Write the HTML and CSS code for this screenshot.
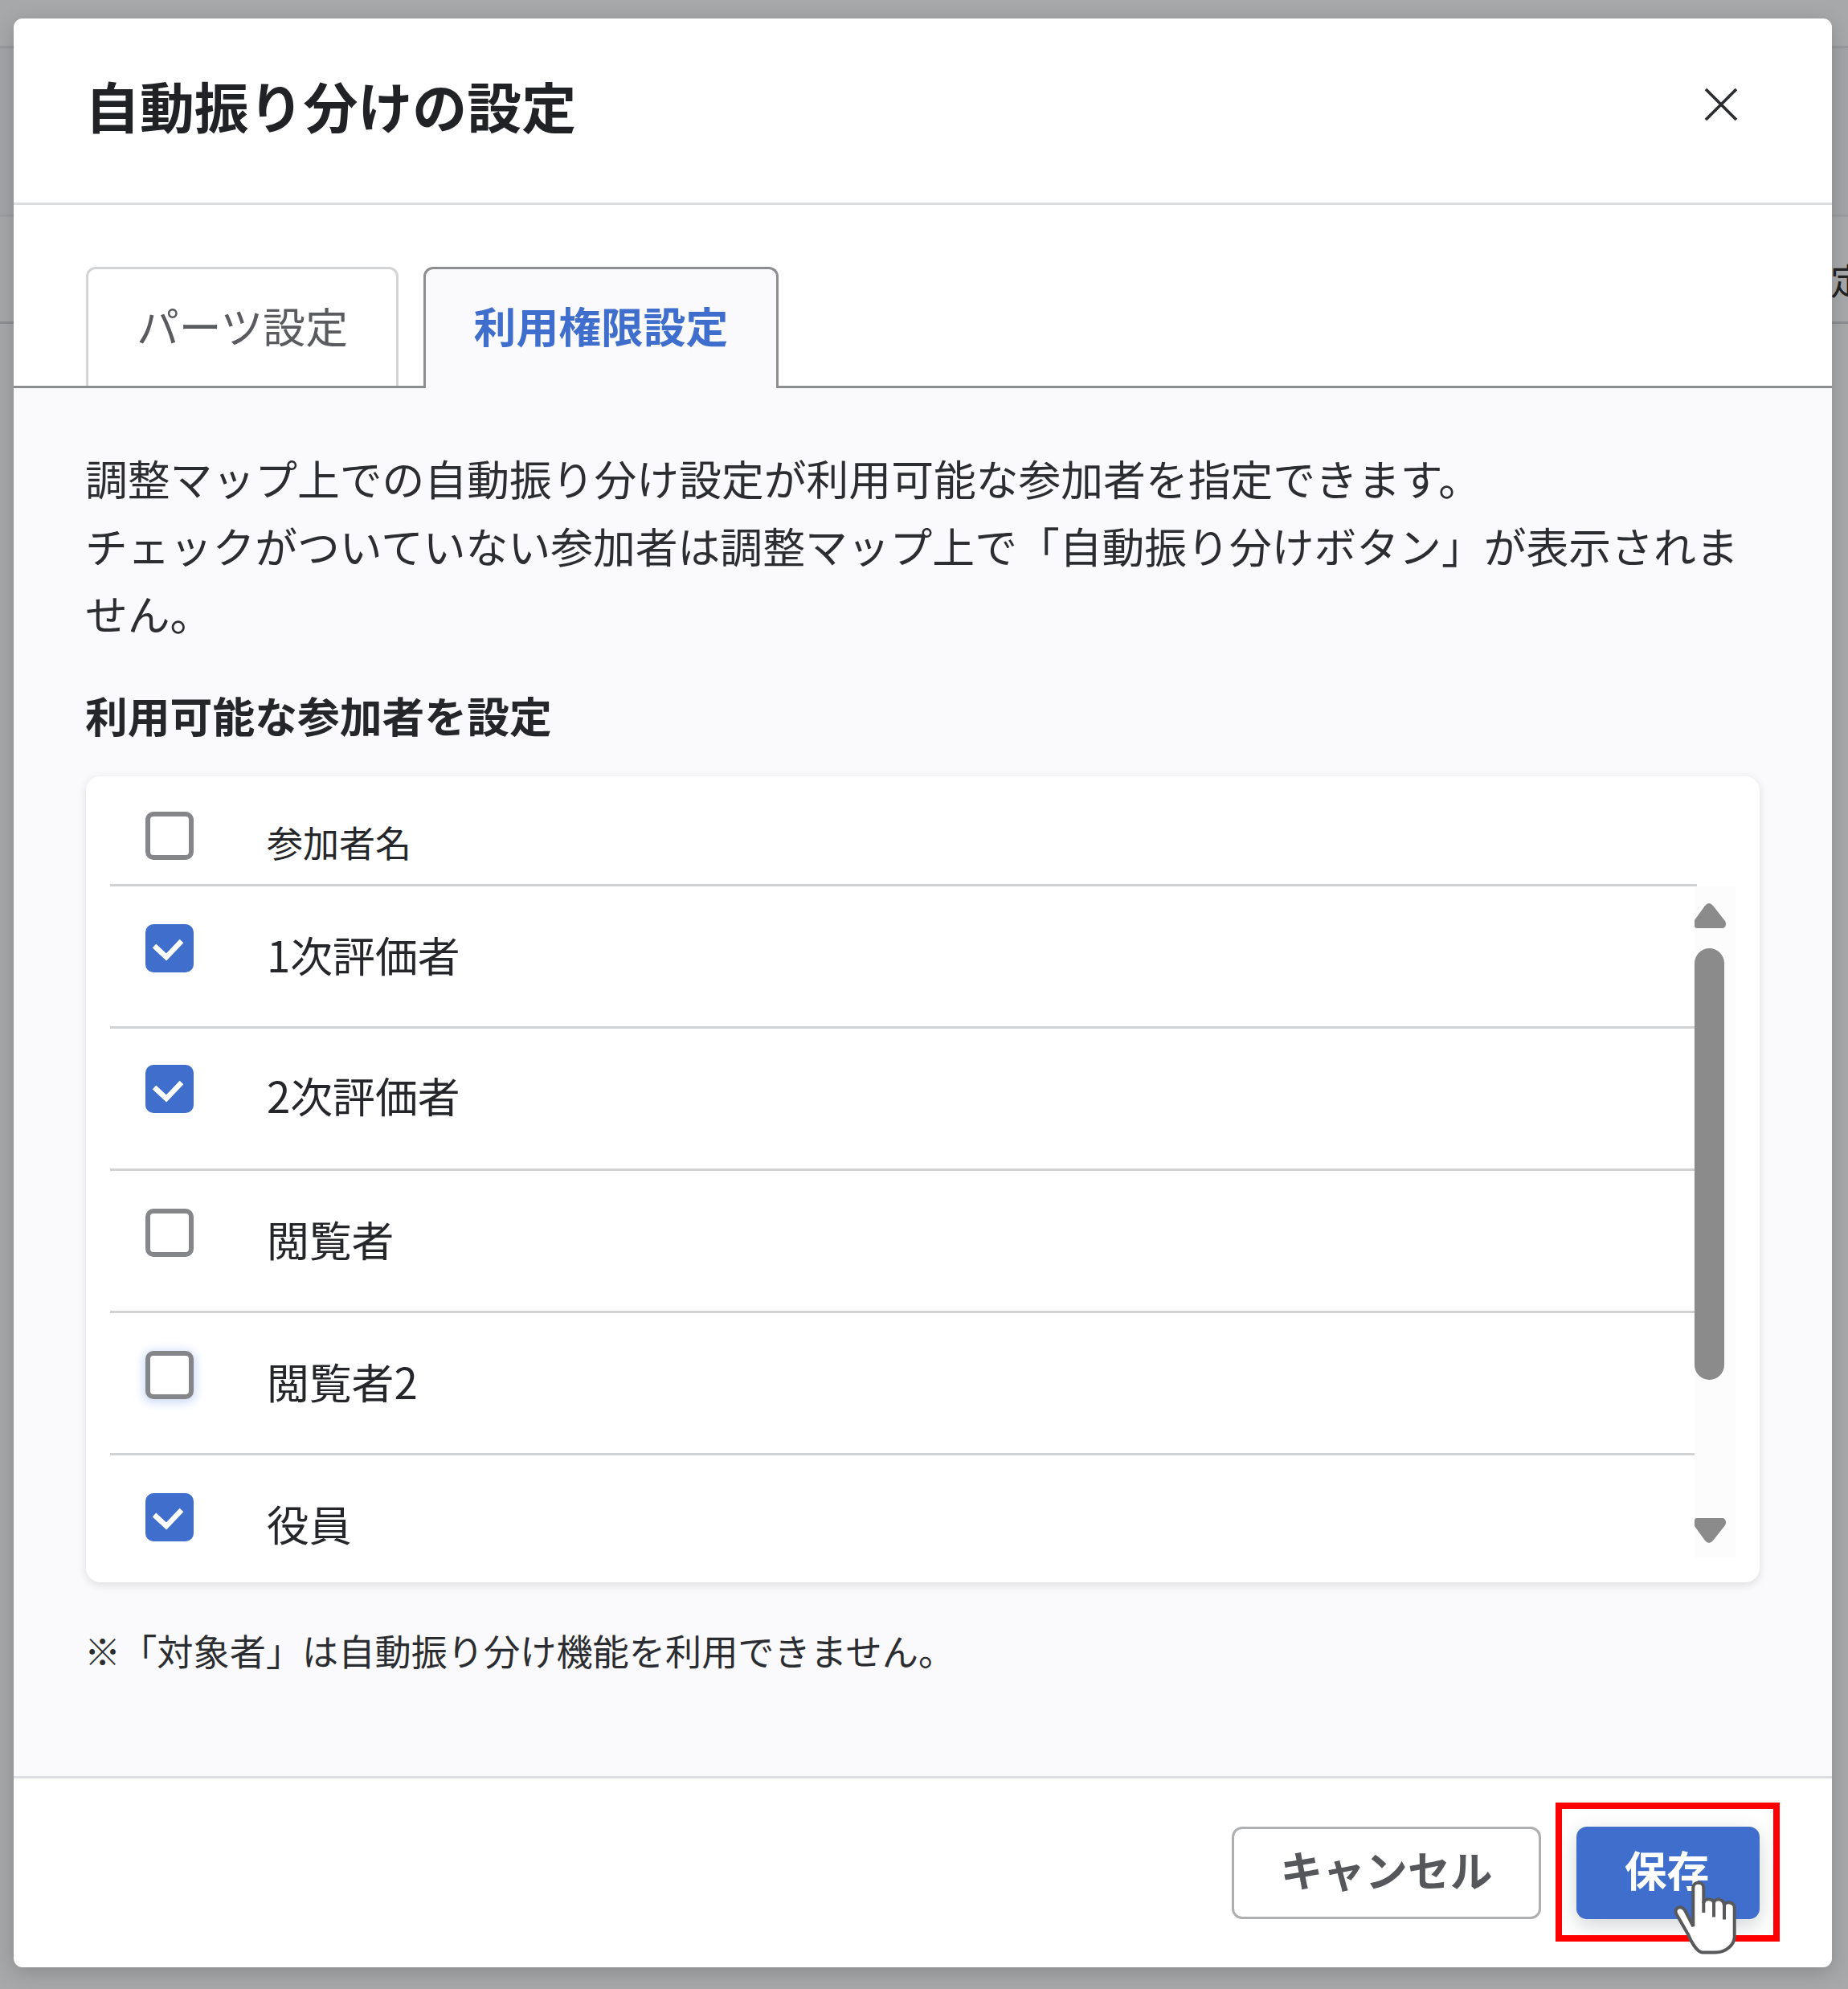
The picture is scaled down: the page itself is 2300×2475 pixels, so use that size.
FILE: index.html
```html
<!DOCTYPE html>
<html lang="ja">
<head>
<meta charset="utf-8">
<title>自動振り分けの設定</title>
<link rel="stylesheet" href="styles.css">
</head>
<body>
<div class="backdrop">
  <div class="backdrop-band"></div>
  <div class="backdrop-row"><span class="backdrop-text">定</span></div>
</div>
<div class="modal">
  <header class="header">
    <h1 class="title">自動振り分けの設定</h1>
    <svg class="close" viewBox="0 0 42 42"><path d="M2 2 40 40M40 2 2 40"/></svg>
  </header>
  <nav class="tabs">
    <div class="tab">パーツ設定</div>
    <div class="tab tab-active">利用権限設定</div>
  </nav>
  <main class="body">
    <p class="lead">調整マップ上での自動振り分け設定が利用可能な参加者を指定できます。<br>チェックがついていない参加者は調整マップ上で「自動振り分けボタン」が表示されません。</p>
    <h2 class="subtitle">利用可能な参加者を設定</h2>
    <section class="card">
      <div class="card-head"><span class="box"></span><span class="head-label">参加者名</span></div>
      <div class="list-area">
        <div class="list">
          <div class="row"><span class="box checked"><svg viewBox="0 0 60 60"><path d="M11 27 26 41 45 21"/></svg></span><span class="name">1次評価者</span></div>
          <div class="row row-second"><span class="box checked"><svg viewBox="0 0 60 60"><path d="M11 28 26 42 45 22"/></svg></span><span class="name">2次評価者</span></div>
          <div class="row"><span class="box"></span><span class="name">閲覧者</span></div>
          <div class="row"><span class="box focused"></span><span class="name">閲覧者2</span></div>
          <div class="row"><span class="box checked"><svg viewBox="0 0 60 60"><path d="M11 27 26 41 45 21"/></svg></span><span class="name">役員</span></div>
        </div>
        <div class="scrollbar">
          <svg class="arrow" viewBox="0 0 40 33"><path d="M0 22 13 4Q18-2 23 4L38 23Q41 29 36 32H3Q0 32 0 29Z"/></svg>
          <div class="thumb"></div>
          <svg class="arrow arrow-down" viewBox="0 0 40 33"><path d="M0 11 13 29Q18 35 23 29L38 10Q41 4 36 1H3Q0 1 0 4Z"/></svg>
        </div>
      </div>
    </section>
    <p class="note">※「対象者」は自動振り分け機能を利用できません。</p>
  </main>
  <footer class="footer">
    <div class="button">キャンセル</div>
    <div class="button primary">保存
      <div class="highlight"></div>
      <svg class="cursor" viewBox="0 0 80 94"><path d="M25.300 58V10C25.300 1.500 38.300 1.500 38.300 10V29C39 22.500 50 22.500 51 29C52 22.500 63 22.500 64 32C65 26.500 76.700 27 76.700 35V71C76.700 81 66 90.500 53 90.500H37C30 90.500 22 76 19 68L4 42C1.500 34 11 31.500 15 38Z"/><path d="M38.300 27V41M51 28V46.500M64 31V49.500"/></svg>
    </div>
  </footer>
</div>
</body>
</html>
```
FILE: styles.css
```css
* { box-sizing: border-box; }
body {
  margin: 0;
  width: 2300px;
  height: 2475px;
  padding: 23px 20px 27px 17px;
  overflow: hidden;
  position: relative;
  background: #a7a8aa;
  color: #24262a;
  font: 400 52.8px/84px "Noto Sans CJK JP", sans-serif;
}
h1, h2, p { margin: 0; }
.backdrop { position: absolute; inset: 0; padding-top: 57px; }
.backdrop-band { height: 213px; background: #a3a4a7; border-top: 3px solid #98999d; border-bottom: 3px solid #9d9ea1; }
.backdrop-row { height: 133px; border-bottom: 3px solid #8d8e91; display: flex; justify-content: flex-end; }
.backdrop-text { margin-right: -23px; padding-top: 36px; font-size: 45px; color: #222; }
.modal {
  position: relative;
  height: 2425px;
  display: flex;
  flex-direction: column;
  background: #fff;
  border-radius: 11px;
  box-shadow: 0 6px 26px rgba(0, 0, 0, .18);
}
.header {
  height: 232px;
  padding: 0 117px 14px 89px;
  border-bottom: 3px solid #dcdee1;
  display: flex;
  align-items: center;
  justify-content: space-between;
}
.title { font-size: 67.9px; line-height: 100px; font-weight: 700; color: #202226; }
.close { width: 42px; height: 42px; fill: none; stroke: #2b2d30; stroke-width: 3.8; margin-top: -1px; }
.tabs {
  height: 228px;
  padding: 77px 0 0 90px;
  border-bottom: 3px solid #8d8e90;
  display: flex;
  gap: 31px;
}
.tab {
  width: 389px;
  height: 148px;
  border: 3px solid #d2d4d6;
  border-bottom: 0;
  border-radius: 12px 12px 0 0;
  display: flex;
  justify-content: center;
  padding-top: 27px;
  color: #595b5e;
}
.tab-active {
  width: 442px;
  height: 151px;
  border-color: #8d8e90;
  background: #fafafc;
  color: #3f6ecd;
  font-weight: 700;
}
.body { flex: 1; padding: 69px 90px 0; background: #fafafc; }
.lead { width: 2070px; margin-left: -1px; color: #2b2d31; }
.subtitle { margin: 43px 0 0 -1px; font-size: 52.8px; line-height: 84px; }
.card {
  margin-top: 35px;
  height: 1003px;
  padding: 0 30px;
  background: #fff;
  border-radius: 18px;
  box-shadow: 0 3px 12px rgba(0, 0, 0, .12);
}
.card-head {
  width: 1975px;
  height: 137px;
  border-bottom: 3px solid #d0d2d4;
  padding: 44px 0 0 44px;
  display: flex;
  gap: 91px;
}
.box { width: 60px; height: 60px; flex: none; border: 6px solid #858689; border-radius: 10px; background: #fff; }
.checked { border: 0; background: #3f6ecd; }
.checked svg { display: block; width: 60px; height: 60px; fill: none; stroke: #fff; stroke-width: 6.5; }
.focused { box-shadow: 0 2px 12px 3px #cfdcf8; }
.head-label { font-size: 45px; line-height: 60px; padding-top: 8px; }
.list-area { display: flex; height: 835px; }
.list { width: 1972px; overflow: hidden; }
.row { height: 176.9px; padding: 47px 0 0 44px; border-bottom: 3px solid #d0d2d4; display: flex; gap: 91px; }
.row-second { padding-top: 45px; }
.row:last-child { border-bottom: 0; }
.name { line-height: 60px; padding-top: 7px; }
.scrollbar { width: 51px; background: #fcfcfc; padding: 20px 0 17px; display: flex; flex-direction: column; }
.arrow { width: 40px; height: 33px; fill: #8b8b8b; }
.thumb { width: 37px; height: 537px; margin-top: 24px; border-radius: 19px; background: #8b8b8b; }
.arrow-down { margin-top: auto; }
.note { margin: 43px 0 0 -2px; font-size: 45.2px; line-height: 84px; color: #2b2d31; }
.footer {
  height: 238px;
  padding: 60px 90px 0;
  border-top: 3px solid #dcdee1;
  display: flex;
  justify-content: flex-end;
  gap: 44px;
}
.button {
  position: relative;
  width: 385px;
  height: 115px;
  border: 3px solid #adafb1;
  border-radius: 13px;
  display: flex;
  justify-content: center;
  padding-top: 7px;
  font-weight: 700;
  color: #55575b;
}
.primary { width: 228px; border: 0; padding: 10px 3px 0 0; background: #3f6ecd; color: #fff; box-shadow: 0 8px 26px rgba(30, 40, 50, .2); }
.highlight { position: absolute; inset: -30px -25px -28px -26px; border: 8px solid #f00; }
.cursor { position: absolute; left: 120px; top: 66px; width: 80px; height: 94px; fill: #fff; stroke: #58595b; stroke-width: 4; }
```
